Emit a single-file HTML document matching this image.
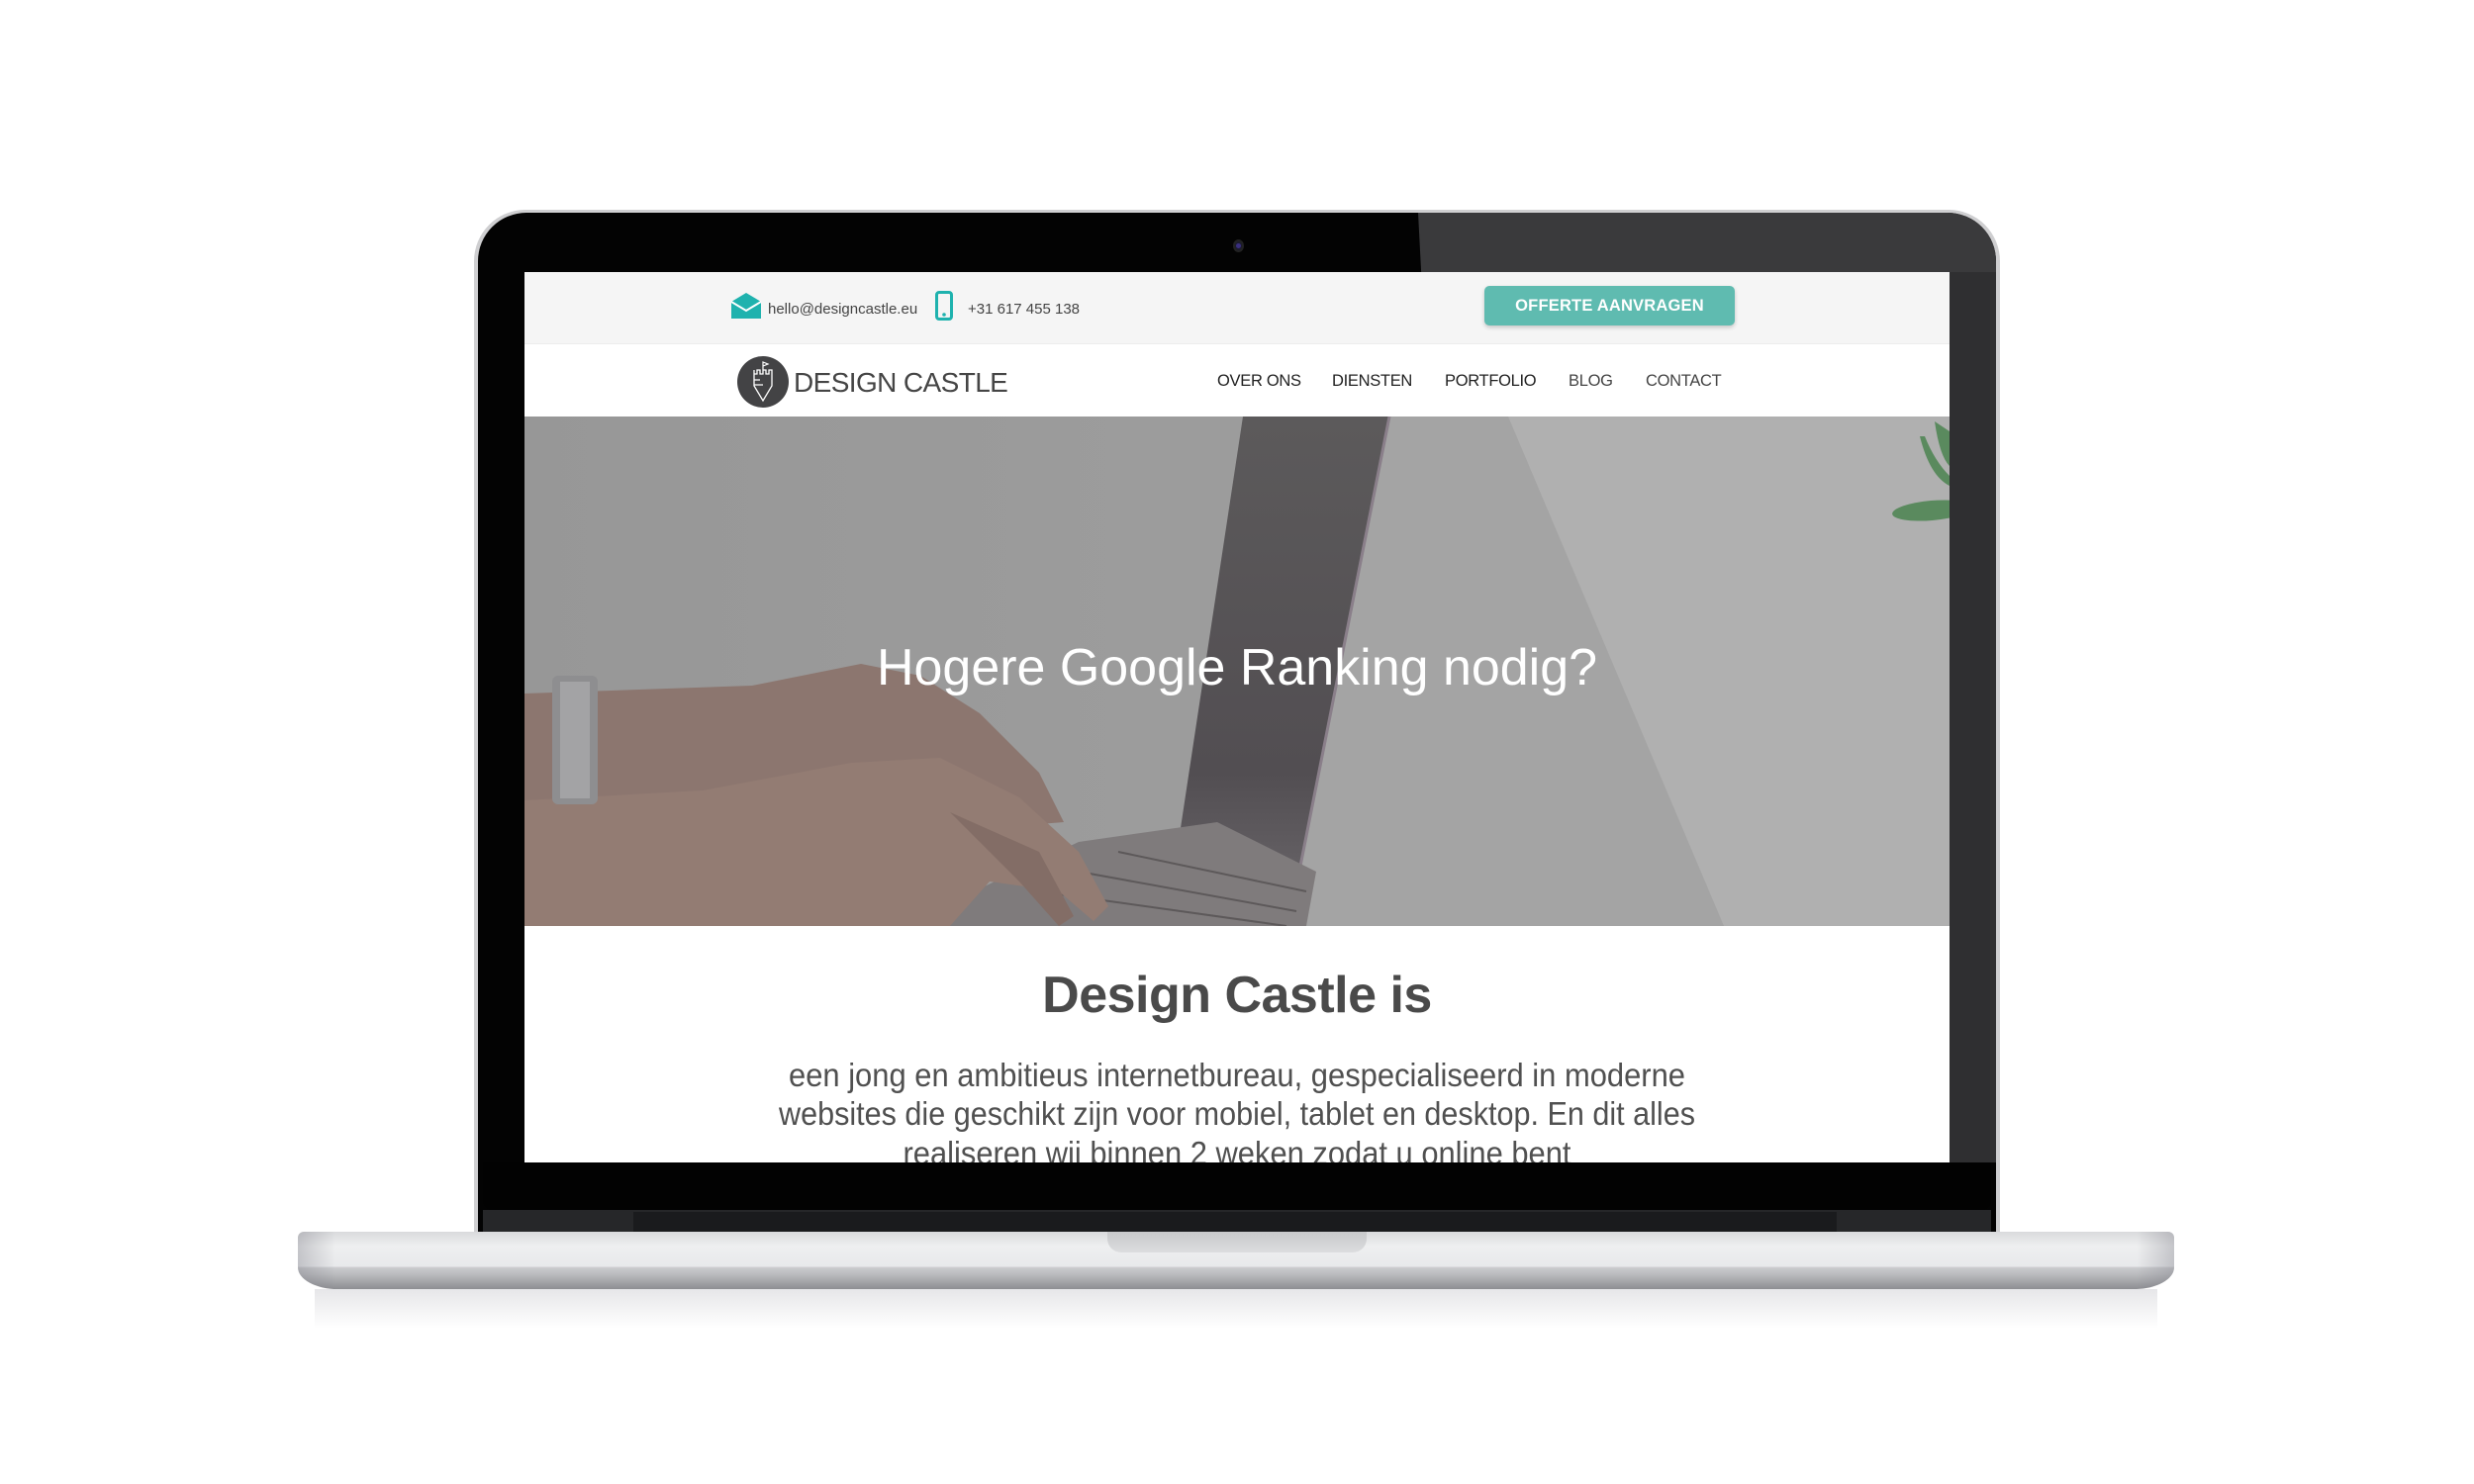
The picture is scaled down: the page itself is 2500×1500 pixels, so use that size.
<!DOCTYPE html>
<html><head><meta charset="utf-8"><style>
*{margin:0;padding:0;box-sizing:border-box}
body{width:2500px;height:1500px;background:#fff;position:relative;overflow:hidden;font-family:"Liberation Sans",sans-serif}
.abs{position:absolute}
.nav{position:absolute;font-size:16.5px;color:#222;white-space:nowrap;letter-spacing:-0.3px}
</style></head><body>
<!-- bezel -->
<div class="abs" style="left:479px;top:212px;width:1542px;height:1040px;border-radius:52px 52px 0 0;background:#cfcfd1"></div>
<div class="abs" style="left:483px;top:215px;width:1534px;height:1037px;border-radius:49px 49px 0 0;background:#030303;overflow:hidden">
  <svg width="1534" height="1037" style="position:absolute;left:0;top:0"><polygon points="950,0 1534,0 1534,960 1000,960" fill="#3a3a3c"/><polygon points="990,60 1534,60 1534,960 1040,960" fill="#2f2f31"/></svg>
</div>
<div class="abs" style="left:1246px;top:242px;width:11px;height:13px;border-radius:50%;background:#1b1b2e;border:2px solid #222"></div>
<div class="abs" style="left:1249px;top:246px;width:5px;height:5px;border-radius:50%;background:#3a2f80"></div>
<!-- lower bezel band -->
<div class="abs" style="left:488px;top:1175px;width:1524px;height:48px;background:#020202;border-radius:0 0 10px 10px"></div>
<div class="abs" style="left:488px;top:1223px;width:1524px;height:24px;background:#262729"></div>
<div class="abs" style="left:640px;top:1225px;width:1216px;height:22px;background:#1a1b1d"></div>
<!-- screen -->
<div class="abs" style="left:530px;top:275px;width:1440px;height:900px;background:#fff;overflow:hidden">
  <div class="abs" style="left:0;top:0;width:1440px;height:73px;background:#f5f5f5;border-bottom:1px solid #ececec"></div>
  <svg class="abs" style="left:209px;top:21px" width="30" height="26" viewBox="0 0 30 26"><polygon points="0,9 15,0 30,9 30,26 0,26" fill="#1fb2ae"/><polyline points="0,9 15,18 30,9" fill="none" stroke="#fff" stroke-width="2"/></svg>
  <div class="abs" style="left:246px;top:29px;font-size:15px;color:#444">hello@designcastle.eu</div>
  <svg class="abs" style="left:415px;top:19px" width="18" height="30" viewBox="0 0 18 30"><rect x="1.5" y="1.5" width="15" height="27" rx="2.5" fill="none" stroke="#1fb2ae" stroke-width="3"/><circle cx="9" cy="24" r="1.8" fill="#1fb2ae"/></svg>
  <div class="abs" style="left:448px;top:29px;font-size:15px;color:#444">+31 617 455 138</div>
  <div class="abs" style="left:970px;top:14px;width:253px;height:40px;border-radius:5px;background:#5fbbb0;box-shadow:0 2px 4px rgba(0,0,0,.2);color:#fff;font-size:16.5px;font-weight:bold;text-align:center;line-height:40px;letter-spacing:0.2px">OFFERTE AANVRAGEN</div>
  <!-- logo -->
  <svg class="abs" style="left:215px;top:85px" width="52" height="52" viewBox="0 0 52 52"><circle cx="26" cy="26" r="26" fill="#434345"/><path d="M17 14v4h3v-4h3v4h3v-4h3v4h3v-4h3v16l-9 15-9-15z" fill="none" stroke="#fff" stroke-width="1.3"/><path d="M26 14V6l5 2-5 2" fill="none" stroke="#fff" stroke-width="1.2"/><path d="M17 24h6M17 29h9" stroke="#fff" stroke-width="1.2"/></svg>
  <div class="abs" style="left:272px;top:96px;font-size:28px;color:#454545;letter-spacing:-0.6px">DESIGN CASTLE</div>
  <div class="nav" style="left:700px;top:101px">OVER ONS</div>
  <div class="nav" style="left:816px;top:101px">DIENSTEN</div>
  <div class="nav" style="left:930px;top:101px">PORTFOLIO</div>
  <div class="nav" style="left:1055px;top:101px;color:#444">BLOG</div>
  <div class="nav" style="left:1133px;top:101px;color:#444">CONTACT</div>
  <!-- hero -->
  <svg class="abs" style="left:0;top:146px" width="1440" height="515" viewBox="0 0 1440 515">
    <defs>
      <linearGradient id="w" x1="0" x2="1"><stop offset="0" stop-color="#979797"/><stop offset="1" stop-color="#a2a2a2"/></linearGradient>
      <linearGradient id="lid" x1="0" x2="0" y1="0" y2="1"><stop offset="0" stop-color="#5c5a5b"/><stop offset="0.7" stop-color="#524e52"/><stop offset="1" stop-color="#6e6a6e"/></linearGradient>
    </defs>
    <rect width="1440" height="515" fill="url(#w)"/>
    <polygon points="874,0 994,0 1212,515 772,515" fill="#a4a4a4"/>
    <polygon points="994,0 1440,0 1440,515 1212,515" fill="#b0b0b0"/>
    <polygon points="726,0 874,0 772,515 648,515" fill="url(#lid)"/>
    <line x1="874" y1="0" x2="772" y2="515" stroke="#8a7f8a" stroke-width="3"/>
    <polygon points="380,515 560,430 700,410 800,460 790,515" fill="#7f7b7c"/>
    <g stroke="#5d595a" stroke-width="2">
      <line x1="600" y1="440" x2="790" y2="480"/><line x1="560" y1="460" x2="780" y2="500"/><line x1="520" y1="480" x2="770" y2="515"/>
    </g>
    <path d="M0 280 L230 272 L340 250 L400 262 L460 300 L520 360 L545 410 L520 412 L470 385 L300 392 L0 395Z" fill="#8c766f"/>
    <path d="M0 388 L180 378 L330 350 L420 345 L500 385 L560 440 L590 495 L575 510 L540 480 L470 470 L430 515 L0 515Z" fill="#937c73"/>
    <path d="M430 400 L520 440 L555 505 L540 515 L500 470Z" fill="#836d66"/>
    <rect x="28" y="262" width="46" height="130" rx="6" fill="#8e8e90"/>
    <rect x="36" y="268" width="30" height="118" fill="#a3a3a5"/>
    <g fill="#5a8a5e">
      <ellipse cx="1422" cy="95" rx="40" ry="10" transform="rotate(-5 1422 95)"/>
      <path d="M1410 20 Q1420 60 1440 70 L1440 60 Q1425 45 1415 20Z"/>
      <path d="M1425 5 Q1430 40 1440 50 L1440 15Z"/>
    </g>
    <text x="720" y="271" text-anchor="middle" font-family="Liberation Sans,sans-serif" font-size="52" fill="#fff" textLength="728" lengthAdjust="spacingAndGlyphs">Hogere Google Ranking nodig?</text>
  </svg>
  <!-- content -->
  <div class="abs" style="left:0;top:701px;width:1440px;text-align:center;font-size:52px;font-weight:bold;color:#4a4a4a;letter-spacing:-0.5px">Design Castle is</div>
  <svg class="abs" style="left:0;top:780px" width="1440" height="130">
    <g font-family="Liberation Sans,sans-serif" font-size="33" fill="#505050" text-anchor="middle">
      <text x="720" y="43" textLength="906" lengthAdjust="spacingAndGlyphs">een jong en ambitieus internetbureau, gespecialiseerd in moderne</text>
      <text x="720" y="82" textLength="926" lengthAdjust="spacingAndGlyphs">websites die geschikt zijn voor mobiel, tablet en desktop. En dit alles</text>
      <text x="720" y="122" textLength="675" lengthAdjust="spacingAndGlyphs">realiseren wij binnen 2 weken zodat u online bent</text>
    </g>
  </svg>
</div>
<!-- base -->
<div class="abs" style="left:301px;top:1245px;width:1896px;height:58px;border-radius:6px 6px 40px 40px/6px 6px 22px 22px;background:linear-gradient(#d9dadc 0%,#eeeff0 25%,#e8e9eb 60%,#c9cacd 63%,#b9babd 75%,#8d8e92 100%)"></div>
<div class="abs" style="left:301px;top:1245px;width:1896px;height:58px;border-radius:6px 6px 40px 40px/6px 6px 22px 22px;background:linear-gradient(90deg,rgba(120,120,130,.35),rgba(255,255,255,0) 2%,rgba(255,255,255,0) 98%,rgba(120,120,130,.35))"></div>
<div class="abs" style="left:1119px;top:1245px;width:262px;height:21px;border-radius:0 0 14px 14px;background:linear-gradient(#c8c9cb,#dcdddf)"></div>
<div class="abs" style="left:318px;top:1303px;width:1862px;height:40px;background:linear-gradient(rgba(200,200,205,.45),rgba(255,255,255,0))"></div>
</body></html>
